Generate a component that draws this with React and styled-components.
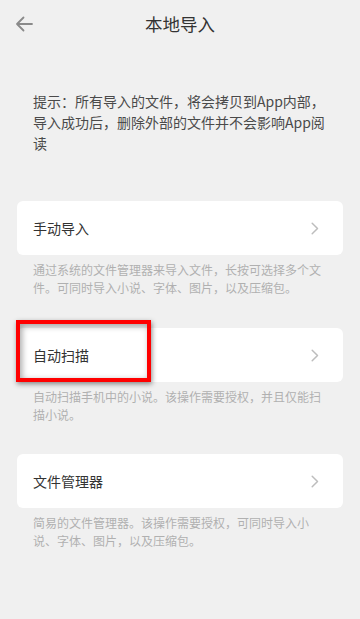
import React from 'react';
import styled, { createGlobalStyle } from 'styled-components';

const GlobalStyle = createGlobalStyle`
  html, body {
    margin: 0;
    padding: 0;
    background: #f0f0f0;
  }
  body {
    font-family: "Noto Sans CJK SC", "Noto Sans", sans-serif;
    -webkit-font-smoothing: antialiased;
  }
`;

const Page = styled.div`
  width: 360px;
  min-height: 619px;
  background: #f0f0f0;
  display: flex;
  flex-direction: column;
`;

// 顶部标题栏
const Header = styled.header`
  height: 48px;
  display: flex;
  align-items: center;
  justify-content: center;
  position: relative;
`;

const BackButton = styled.button`
  position: absolute;
  left: 12px;
  top: 12px;
  width: 24px;
  height: 24px;
  padding: 0;
  border: none;
  background: transparent;
  display: flex;
  align-items: center;
  justify-content: center;
`;

const Title = styled.h1`
  margin: 0;
  font-size: 17.5px;
  font-weight: 400;
  color: #333;
  line-height: 1;
`;

const Hint = styled.p`
  margin: 43px 33px 47px;
  font-size: 14px;
  line-height: 21px;
  color: #4a4a4a;
`;

const Section = styled.div`
  display: flex;
  flex-direction: column;
  margin-bottom: ${p => p.$gap || 30}px;
`;

const Card = styled.div`
  position: relative;
  margin: 0 17px;
  height: 54px;
  background: #fff;
  border-radius: 6px;
  display: flex;
  align-items: center;
  justify-content: space-between;
  padding: 0 24px 0 16px;
`;

const Label = styled.span`
  font-size: 14px;
  color: #333;
`;

const Desc = styled.p`
  margin: 6px 33px 0;
  font-size: 12px;
  line-height: 18px;
  color: #b0b0b0;
  line-break: strict;
`;

const Highlight = styled.div`
  position: absolute;
  left: -1px;
  top: -8px;
  width: 135px;
  height: 62px;
  box-sizing: border-box;
  border: 4px solid #ff0000;
  box-shadow: 1px 2px 5px rgba(0, 0, 0, 0.45), inset 2px 2px 6px rgba(0, 0, 0, 0.35);
  pointer-events: none;
`;

const BackIcon = () => (
  <svg width="18" height="16" viewBox="0 0 18 16" fill="none">
    <path d="M17 8H2M8.5 1.5L2 8l6.5 6.5" stroke="#8a8a8a" strokeWidth="1.8" strokeLinecap="round" strokeLinejoin="round" />
  </svg>
);

const Chevron = () => (
  <svg width="8" height="13" viewBox="0 0 8 13" fill="none">
    <path d="M1.2 1.2L6.5 6.5L1.2 11.8" stroke="#bdbdbd" strokeWidth="1.5" strokeLinecap="round" strokeLinejoin="round" />
  </svg>
);

const items = [
  {
    label: '手动导入',
    desc: '通过系统的文件管理器来导入文件，长按可选择多个文件。可同时导入小说、字体、图片，以及压缩包。',
    gap: 31
  },
  {
    label: '自动扫描',
    desc: '自动扫描手机中的小说。该操作需要授权，并且仅能扫描小说。',
    gap: 30,
    marked: true
  },
  {
    label: '文件管理器',
    desc: '简易的文件管理器。该操作需要授权，可同时导入小说、字体、图片，以及压缩包。',
    gap: 30
  }
];

export default function App() {
  return (
    <>
      <GlobalStyle />
      <Page>
        <Header>
          <BackButton aria-label="返回">
            <BackIcon />
          </BackButton>
          <Title>本地导入</Title>
        </Header>

        <Hint>提示：所有导入的文件，将会拷贝到App内部，导入成功后，删除外部的文件并不会影响App阅读</Hint>

        {items.map(item => (
          <Section key={item.label} $gap={item.gap}>
            <Card>
              <Label>{item.label}</Label>
              <Chevron />
              {item.marked && <Highlight />}
            </Card>
            <Desc>{item.desc}</Desc>
          </Section>
        ))}
      </Page>
    </>
  );
}
